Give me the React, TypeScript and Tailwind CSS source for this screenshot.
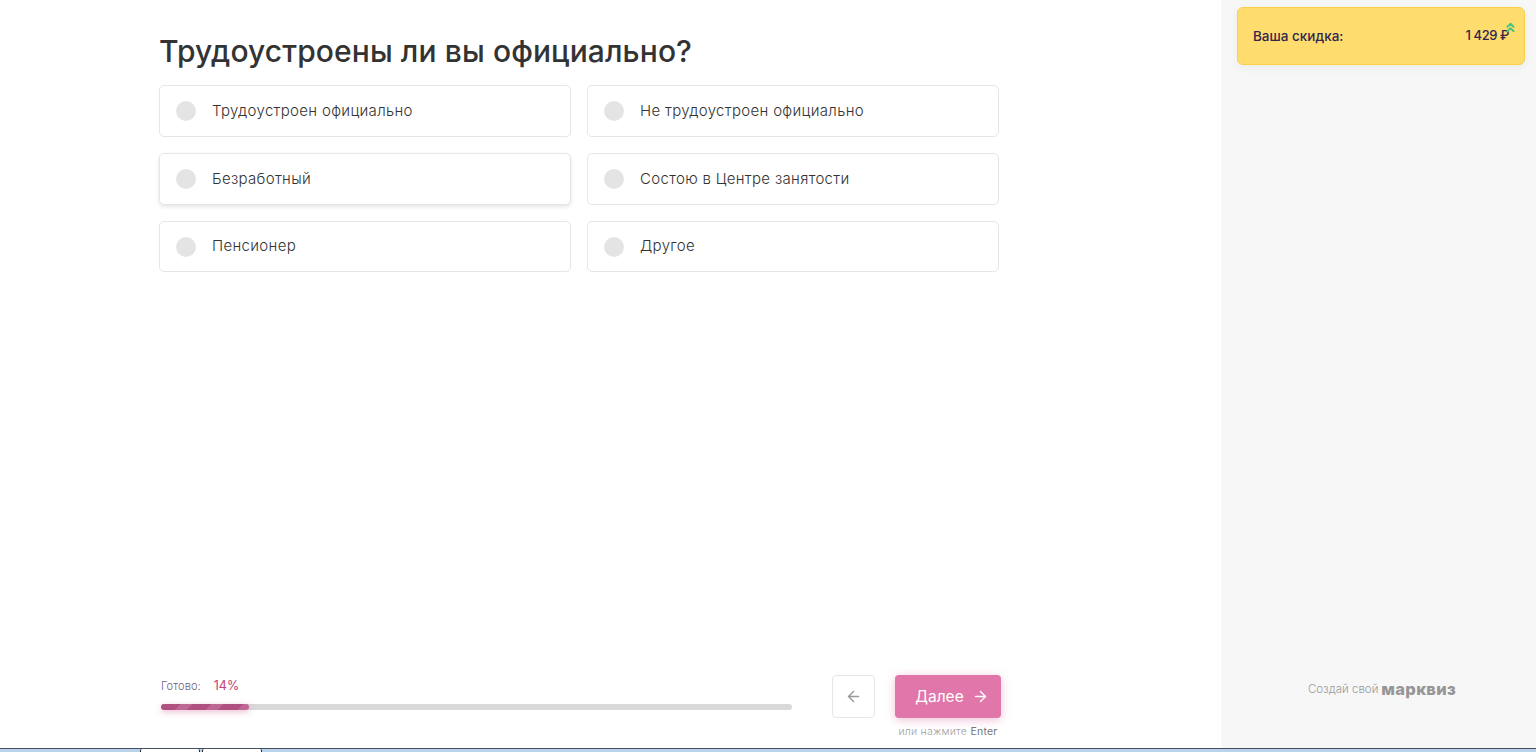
import { ArrowLeft, ArrowRight, ChevronsUp } from "lucide-react";

const options = [
  { label: "Трудоустроен официально", height: "h-[52px]" },
  { label: "Не трудоустроен официально", height: "h-[52px]" },
  { label: "Безработный", height: "h-[52px]", hovered: true },
  { label: "Состою в Центре занятости", height: "h-[52px]" },
  { label: "Пенсионер", height: "h-[51px]" },
  { label: "Другое", height: "h-[51px]" },
];

const OptionCard = ({ label, height, hovered }: { label: string; height: string; hovered?: boolean }) => (
  <div
    className={`${height} flex items-center rounded-[5px] border border-[#e6e6e6] bg-white pl-4 ${
      hovered ? "shadow-[0_2px_4px_rgba(0,0,0,0.1)]" : ""
    }`}
  >
    <span className="h-5 w-5 shrink-0 rounded-full bg-[#e4e4e4]" />
    <span className="ml-4 text-[15px] font-light tracking-[0.33px] text-[#333333]">{label}</span>
  </div>
);

export default function App() {
  return (
    <div className="flex h-screen flex-col overflow-hidden bg-white font-['Inter','Noto_Sans',sans-serif]">
      <div className="flex min-h-0 flex-1">
        <main className="flex w-[1221px] flex-col pl-[159px]">
          <h1 className="mt-[31px] h-[40px] text-[30px] leading-[40px] font-medium tracking-[0.1px] text-[#333333]">
            Трудоустроены ли вы официально?
          </h1>
          <div className="mt-[14px] grid w-[840px] grid-cols-2 gap-x-4 gap-y-4">
            {options.map((option) => (
              <OptionCard key={option.label} {...option} />
            ))}
          </div>

          <div className="mt-auto flex w-[842px] items-start pb-[10px]">
            <div className="ml-[2px] w-[631px] pt-[4px]">
              <div className="flex h-[14px] items-center">
                <span className="text-[11px] font-light tracking-[0.1px] text-[#6f6078]">Готово:</span>
                <span className="ml-[13px] text-[12.5px] text-[#c43d78]">14%</span>
              </div>
              <div className="mt-[11px] h-[6px] rounded-full bg-[#d9d9d9]">
                <div className="h-full w-[88px] rounded-full bg-[repeating-linear-gradient(135deg,#b04f80_0,#b04f80_14px,#bd6792_14px,#bd6792_22px)] shadow-[0_2px_6px_rgba(194,60,120,0.35)]" />
              </div>
            </div>
            <button className="ml-10 flex h-[43px] w-[43px] items-center justify-center rounded-[4px] border border-[#e6e6e6] bg-white text-[#999999]">
              <ArrowLeft size={17} />
            </button>
            <div className="ml-5 flex w-[106px] flex-col items-center">
              <button className="flex h-[43px] w-full items-center justify-center gap-2 rounded-[4px] bg-[#e076a9] pl-[8px] text-[15.5px] font-normal text-white shadow-[0_2px_10px_rgba(224,118,169,0.45)]">
                Далее
                <ArrowRight size={17} />
              </button>
              <span className="mt-[7px] text-[10.5px] leading-[13px] font-light tracking-[0.25px] whitespace-nowrap text-[#a0a0a0]">
                или нажмите <span className="font-normal text-[#777777]">Enter</span>
              </span>
            </div>
          </div>
        </main>

        <aside className="flex w-[315px] flex-col bg-[#f7f7f7] pt-[7px] pr-[11px] pl-4">
          <div className="relative flex h-[58px] items-center justify-between rounded-[6px] border border-[#fdcf45] bg-[#ffdc6e] px-[15px] text-[13.5px] font-medium text-[#33264d] shadow-[0_3px_10px_rgba(0,0,0,0.05)]">
            <span>Ваша скидка:</span>
            <span className="text-[13px] tracking-[-0.4px]">1 429 ₽</span>
            <ChevronsUp size={15} strokeWidth={3} className="absolute top-[12px] right-[6px] text-[#46c47f]" />
          </div>
          <div className="mt-auto mb-[49px] flex items-end justify-center pl-[2px] text-[11.5px] leading-[20px] font-light text-[#999999]">
            Создай свой
            <span className="ml-[3px] text-[16.5px] leading-[20px] font-extrabold tracking-[0.3px] text-[#969696]">марквиз</span>
          </div>
        </aside>
      </div>

      <div className="flex h-[4px] shrink-0 border-t border-[#44505e] bg-[#b9d3ea]">
        <div className="ml-[140px] h-full w-[60px] rounded-t-[2px] border-x border-[#222222] bg-white" />
        <div className="ml-[2px] h-full w-[60px] rounded-t-[2px] border-x border-[#222222] bg-white" />
      </div>
    </div>
  );
}
